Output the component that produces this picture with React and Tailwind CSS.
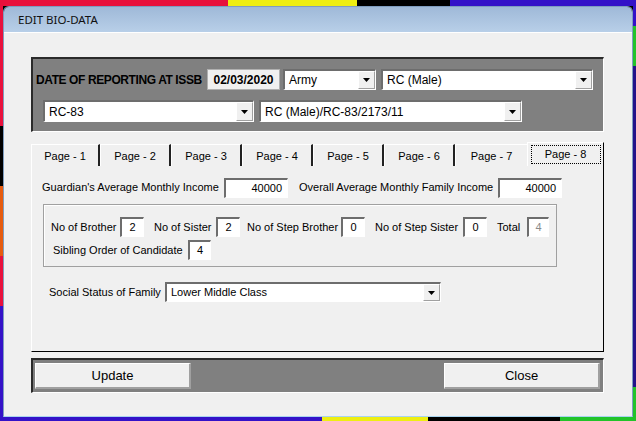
import React from 'react';

const sunken = 'border-t-2 border-l-2 border-b border-r border-t-[#6d6d6d] border-l-[#6d6d6d] border-b-white border-r-white';

const Arrow = () => (
  <div className="w-[17px] h-full flex items-center justify-center bg-[#f0f0f0] border-t border-l border-b border-r border-t-white border-l-white border-b-[#a0a0a0] border-r-[#a0a0a0]">
    <svg width="7" height="4" viewBox="0 0 7 4">
      <path d="M0 0H7L3.5 4Z" fill="#000" />
    </svg>
  </div>
);

const Select = ({ value, className, small }) => (
  <div className={`flex items-stretch bg-white ${sunken} ${className}`}>
    <div
      className={`flex-1 flex items-center pl-[4px] ${
        small ? 'text-[11px]' : 'text-[12px]'
      } text-black overflow-hidden whitespace-nowrap`}
    >
      {value}
    </div>
    <Arrow />
  </div>
);

const Input = ({ value, className, muted, center }) => (
  <div
    className={`flex items-center ${center ? 'justify-center' : 'justify-end pr-[5px]'} bg-white ${sunken} ${className} ${
      muted ? 'text-[#8a8a8a]' : 'text-black'
    }`}
  >
    {value}
  </div>
);

const tabs = [
  { label: 'Page - 1', w: 'w-[69px]' },
  { label: 'Page - 2', w: 'w-[71px]' },
  { label: 'Page - 3', w: 'w-[71px]' },
  { label: 'Page - 4', w: 'w-[71px]' },
  { label: 'Page - 5', w: 'w-[71px]' },
  { label: 'Page - 6', w: 'w-[71px]' },
  { label: 'Page - 7', w: 'w-[72px]', noDivider: true },
];

export default function App() {
  return (
    <div
      className="w-[636px] h-[421px] flex flex-col overflow-hidden bg-black text-[11px] text-black"
      style={{ fontFamily: '"Liberation Sans", Arial, sans-serif' }}
    >
      {/* desktop strip top */}
      <div className="h-[6px] flex shrink-0">
        <div className="w-[228px] bg-[#e8113c]" />
        <div className="w-[129px] bg-[#eeee12]" />
        <div className="w-[93px] bg-black" />
        <div className="flex-1 bg-[#3412c8]" />
      </div>

      <div className="flex h-[411px] shrink-0">
        <div className="w-[3px] flex flex-col">
          <div className="h-[120px] bg-[#e8113c]" />
          <div className="h-[60px] bg-black" />
          <div className="h-[70px] bg-[#e65c10]" />
          <div className="h-[50px] bg-[#e8113c]" />
          <div className="flex-1 bg-[#3412c8]" />
        </div>

        {/* window */}
        <div className="w-[630px] flex flex-col rounded-t-[6px] border border-[#7f9dbf] border-b-[#a9d4ee] overflow-hidden">
          <div className="h-[25px] shrink-0 flex items-center pl-[14px] bg-gradient-to-b from-[#9fb9d8] to-[#b8cfe8]">
            <span className="text-[11.5px] text-[#111]" style={{ fontFamily: '"Noto Sans", "Open Sans", sans-serif' }}>
              EDIT BIO-DATA
            </span>
          </div>

          <div className="flex-1 bg-[#f0f0f0] pl-[27px] pt-[24px] border-t border-white">
            {/* header panel */}
            <div className="w-[573px] h-[75px] bg-[#808080] border-t-2 border-l-2 border-b border-r border-t-[#2a2a2a] border-l-[#2a2a2a] border-b-white border-r-white flex flex-col">
              <div className="flex items-center mt-[10px] h-[21px] pl-[3px]">
                <div className="w-[171px] font-bold text-[12px] tracking-[-0.4px] whitespace-nowrap">
                  DATE OF REPORTING AT ISSB
                </div>
                <div className="w-[73px] h-[21px] flex items-center justify-center bg-[#f0f0f0] border border-[#b0b0b0] font-bold text-[12px]">
                  02/03/2020
                </div>
                <Select value="Army" className="w-[93px] h-[21px] ml-[3px]" />
                <Select value="RC (Male)" className="w-[212px] h-[21px] ml-[5px]" />
              </div>
              <div className="flex items-center mt-[10px] h-[22px] pl-[10px]">
                <Select value="RC-83" className="w-[211px] h-[22px]" />
                <Select value="RC (Male)/RC-83/2173/11" className="w-[263px] h-[22px] ml-[5px]" />
              </div>
            </div>

            {/* tabs */}
            <div className="w-[573px] h-[24px] mt-[10px] flex items-end">
              {tabs.map((t) => (
                <div
                  key={t.label}
                  className={`${t.w} h-[22px] flex items-center justify-center border-t border-l border-t-white border-l-white ${
                    t.noDivider ? '' : 'border-r-2 border-r-[#222]'
                  }`}
                >
                  <span className="pt-[2px]">{t.label}</span>
                </div>
              ))}
              <div className="flex-1 h-[24px] flex items-start justify-center pt-[2px] border-t border-l border-t-white border-l-white border-r border-r-black">
                <span className="w-[70px] h-[19px] flex items-center justify-center border border-dotted border-black">
                  Page - 8
                </span>
              </div>
            </div>

            {/* tab content */}
            <div className="w-[573px] h-[186px] border-l border-l-white border-r border-r-black border-b border-b-black flex flex-col">
              <div className="flex items-center mt-[12px] h-[19px] pl-[10px]">
                <div className="w-[182px] whitespace-nowrap">Guardian's Average Monthly Income</div>
                <Input value="40000" className="w-[64px] h-[20px]" />
                <div className="w-[199px] ml-[11px] whitespace-nowrap">Overall Average Monthly Family Income</div>
                <Input value="40000" className="w-[64px] h-[20px]" />
              </div>

              <div className="w-[514px] h-[63px] ml-[11px] mt-[7px] border border-[#a0a0a0] shadow-[inset_1px_1px_0_#fff] flex flex-col">
                <div className="flex items-center mt-[12px] h-[20px] pl-[7px]">
                  <div className="w-[69px] whitespace-nowrap">No of Brother</div>
                  <Input value="2" center className="w-[24px] h-[20px]" />
                  <div className="w-[62px] ml-[10px] whitespace-nowrap">No of Sister</div>
                  <Input value="2" center className="w-[24px] h-[20px]" />
                  <div className="w-[94px] ml-[7px] whitespace-nowrap">No of Step Brother</div>
                  <Input value="0" center className="w-[24px] h-[20px]" />
                  <div className="w-[88px] ml-[10px] whitespace-nowrap">No of Step Sister</div>
                  <Input value="0" center className="w-[24px] h-[20px]" />
                  <div className="w-[30px] ml-[10px] whitespace-nowrap">Total</div>
                  <Input value="4" muted center className="w-[22px] h-[20px]" />
                </div>
                <div className="flex items-center mt-[3px] h-[20px] pl-[9px]">
                  <div className="w-[135px] whitespace-nowrap">Sibling Order of Candidate</div>
                  <Input value="4" center className="w-[23px] h-[20px]" />
                </div>
              </div>

              <div className="flex items-center mt-[15px] h-[20px] pl-[17px]">
                <div className="w-[116px] whitespace-nowrap">Social Status of Family</div>
                <Select value="Lower Middle Class" small className="w-[276px] h-[20px]" />
              </div>
            </div>

            {/* bottom bar */}
            <div className="w-[573px] h-[35px] mt-[6px] bg-[#808080] border-t-2 border-l-2 border-b border-r border-t-[#2a2a2a] border-l-[#2a2a2a] border-b-white border-r-white flex items-center justify-between pl-[2px] pr-[3px]">
              <button className="w-[156px] h-[26px] bg-[#f0f0f0] text-[13px] border-t border-l border-b-2 border-r-2 border-t-white border-l-white border-b-[#a0a0a0] border-r-[#a0a0a0]">
                Update
              </button>
              <button className="w-[156px] h-[26px] bg-[#f0f0f0] text-[13px] border-t border-l border-b-2 border-r-2 border-t-white border-l-white border-b-[#a0a0a0] border-r-[#a0a0a0]">
                Close
              </button>
            </div>
          </div>
        </div>

        <div className="w-[3px] flex flex-col">
          <div className="h-[20px] bg-[#3412c8]" />
          <div className="h-[40px] bg-[#22c32a]" />
          <div className="flex-1 bg-[#24128a]" />
          <div className="h-[30px] bg-[#22c32a]" />
        </div>
      </div>

      {/* desktop strip bottom */}
      <div className="h-[4px] flex shrink-0">
        <div className="w-[322px] bg-[#3412c8]" />
        <div className="w-[106px] bg-[#eeee12]" />
        <div className="w-[132px] bg-black" />
        <div className="flex-1 bg-[#22c32a]" />
      </div>
    </div>
  );
}
